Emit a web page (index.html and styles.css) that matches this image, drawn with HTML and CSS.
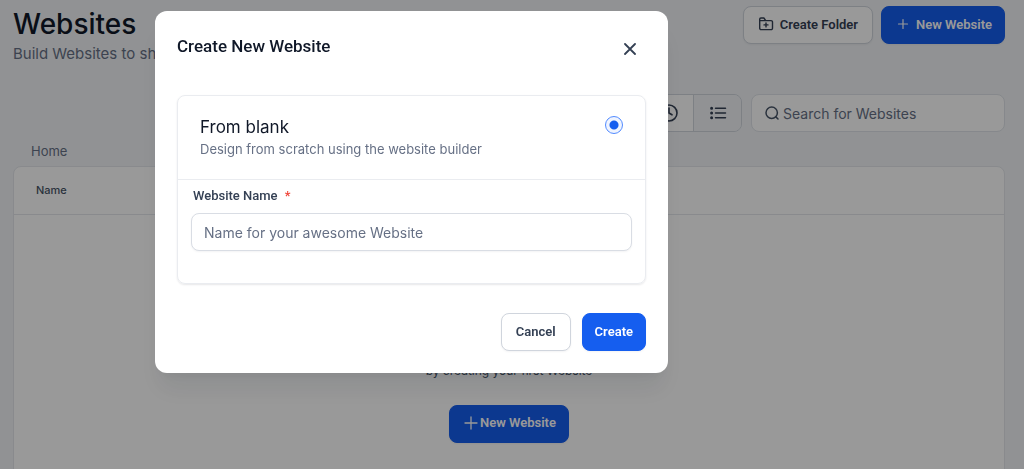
FILE: index.html
```html
<!DOCTYPE html>
<html lang="en">
<head>
    <meta charset="UTF-8">
    <meta name="viewport" content="width=device-width, initial-scale=1.0">
    <title>Websites</title>
    <link rel="stylesheet" href="styles.css">
</head>
<body>
    <main class="page">
        <header class="page-header">
            <div>
                <h1 class="page-title">Websites</h1>
                <p class="page-subtitle">Build Websites to sh</p>
            </div>
            <div class="page-actions">
                <button type="button" class="btn btn-light btn-folder">
                    <svg width="16" height="16" viewBox="0 0 16 16" fill="none" stroke="currentColor" stroke-width="1.4" stroke-linecap="round" stroke-linejoin="round">
                        <path d="M1.7 5V3.2a1.2 1.2 0 0 1 1.2-1.2h3l1.8 2.6h5.4a1.4 1.4 0 0 1 1.4 1.4v6.2a1.4 1.4 0 0 1-1.4 1.4H3.1a1.4 1.4 0 0 1-1.4-1.4V4.6h6M8 6.9v4M6 8.9h4"/>
                    </svg>
                    Create Folder
                </button>
                <button type="button" class="btn btn-primary btn-new">
                    <svg width="12" height="12" viewBox="0 0 12 12" fill="none" stroke="currentColor" stroke-width="1.2" stroke-linecap="round">
                        <path d="M6 1.5v9M1.5 6h9"/>
                    </svg>
                    New Website
                </button>
            </div>
        </header>

        <div class="toolbar">
            <div class="view-switch">
                <button type="button" class="view-btn" aria-label="Recent">
                    <svg width="20" height="20" viewBox="0 0 20 20" fill="none" stroke="currentColor" stroke-width="1.6" stroke-linecap="round" stroke-linejoin="round">
                        <circle cx="10" cy="10" r="8"/>
                        <path d="M10 5v5l3 1.8"/>
                    </svg>
                </button>
                <button type="button" class="view-btn active" aria-label="List">
                    <svg width="18" height="18" viewBox="0 0 18 18" fill="none" stroke="currentColor" stroke-width="1.5" stroke-linecap="round">
                        <path d="M6.5 4.3h10M6.5 9h10M6.5 13.7h10"/>
                        <path stroke-width="3" d="M2.6 4.3h.01M2.6 9h.01M2.6 13.7h.01"/>
                    </svg>
                </button>
            </div>
            <label class="search">
                <svg width="14" height="14" viewBox="0 0 14 14" fill="none" stroke="currentColor" stroke-width="1.5" stroke-linecap="round">
                    <circle cx="6.7" cy="6.7" r="5.7"/>
                    <path d="M10.9 10.9l2.1 2.1"/>
                </svg>
                <input type="search" placeholder="Search for Websites" aria-label="Search for Websites">
            </label>
        </div>

        <nav class="breadcrumb"><a href="#">Home</a></nav>

        <section class="list-card">
            <table class="list-table">
                <thead>
                    <tr><th scope="col">Name</th></tr>
                </thead>
            </table>
            <div class="empty">
                <p class="empty-text">by creating your first Website</p>
                <button type="button" class="btn btn-primary btn-empty">
                    <svg width="14" height="14" viewBox="0 0 14 14" fill="none" stroke="currentColor" stroke-width="1.3" stroke-linecap="round">
                        <path d="M7 1v12M1 7h12"/>
                    </svg>
                    New Website
                </button>
            </div>
        </section>
    </main>

    <div class="overlay">
        <form class="modal" role="dialog" aria-modal="true" aria-labelledby="modal-title">
            <div class="modal-header">
                <h2 class="modal-title" id="modal-title">Create New Website</h2>
                <button type="button" class="modal-close" aria-label="Close">
                    <svg width="12" height="12" viewBox="0 0 12 12" fill="none" stroke="currentColor" stroke-width="1.8" stroke-linecap="round">
                        <path d="M1 1l10 10M11 1L1 11"/>
                    </svg>
                </button>
            </div>

            <div class="option">
                <div class="option-head">
                    <label for="from-blank">
                        <span class="option-title">From blank</span>
                        <span class="option-text">Design from scratch using the website builder</span>
                    </label>
                    <input type="radio" class="radio" id="from-blank" name="source" checked>
                </div>
                <div class="option-body">
                    <label class="field-label" for="website-name">Website Name <span class="required">*</span></label>
                    <input type="text" class="field" id="website-name" placeholder="Name for your awesome Website">
                </div>
            </div>

            <div class="modal-footer">
                <button type="button" class="btn btn-light">Cancel</button>
                <button type="submit" class="btn btn-primary">Create</button>
            </div>
        </form>
    </div>
</body>
</html>
```
FILE: styles.css
```css
* {
    box-sizing: border-box;
}
body {
    margin: 0;
    height: 100vh;
    overflow: hidden;
    background: #f2f4f7;
    color: #101828;
    font-family: Inter, sans-serif;
    font-size: 14px;
}
h1, h2, p {
    margin: 0;
    font-weight: 400;
}
button, input {
    font: inherit;
}
svg {
    flex: none;
}

/* page */
.page {
    padding: 6px 19px 0 13px;
}
.page-header {
    display: flex;
    justify-content: space-between;
    align-items: flex-start;
    height: 88px;
}
.page-title {
    font-size: 28px;
    font-weight: 500;
    line-height: 36px;
}
.page-subtitle {
    font-size: 15px;
    line-height: 24px;
    color: #667085;
}
.page-actions {
    display: flex;
    gap: 8px;
}
.btn {
    display: flex;
    align-items: center;
    justify-content: center;
    height: 38px;
    padding: 0 12px 2px;
    border: 1px solid;
    border-radius: 8px;
    font-family: Roboto, sans-serif;
    font-size: 13px;
    font-weight: 600;
    box-shadow: 0 1px 2px rgba(16, 24, 40, 0.05);
}
.btn-light {
    padding: 0 14px 2px;
    background: #fff;
    border-color: #d0d5dd;
    color: #344054;
}
.btn-primary {
    background: #155eef;
    border-color: #155eef;
    color: #fff;
}
.btn-folder {
    gap: 6px;
}
.btn-new {
    gap: 7px;
    padding-left: 15px;
}

.toolbar {
    display: flex;
    justify-content: flex-end;
    gap: 9px;
}
.view-switch {
    display: flex;
    border: 1px solid #d0d5dd;
    border-radius: 8px;
    overflow: hidden;
}
.view-btn {
    display: flex;
    align-items: center;
    justify-content: center;
    width: 48px;
    height: 36px;
    padding: 0;
    border: 0;
    background: #fff;
    color: #344054;
}
.view-btn.active {
    background: #f2f4f7;
    border-left: 1px solid #d0d5dd;
}
.search {
    display: flex;
    align-items: center;
    gap: 4px;
    width: 254px;
    height: 38px;
    padding: 0 13px;
    background: #fff;
    border: 1px solid #dfe3e9;
    border-radius: 8px;
    color: #475467;
}
.search input {
    flex: 1;
    min-width: 0;
    padding: 0;
    border: 0;
    outline: 0;
    background: none;
}
::placeholder {
    color: #667085;
    opacity: 1;
}

.breadcrumb {
    padding: 9px 18px 5px;
    font-size: 13px;
    line-height: 20px;
}
.breadcrumb a {
    color: #667085;
    text-decoration: none;
}

.list-card {
    background: #fff;
    border: 1px solid #e4e7ec;
    border-radius: 8px;
}
.list-table {
    width: 100%;
    border-collapse: collapse;
}
.list-table th {
    height: 47px;
    padding: 0 22px;
    border-bottom: 1px solid #e4e7ec;
    color: #475467;
    font-size: 11px;
    font-weight: 500;
    text-align: left;
}
.empty {
    display: flex;
    flex-direction: column;
    align-items: center;
    gap: 24px;
    padding: 146px 0 40px;
}
.empty-text {
    font-size: 12px;
    line-height: 20px;
    color: #475467;
}
.btn-empty {
    gap: 2px;
    padding-left: 14px;
}

/* dialog */
.overlay {
    position: fixed;
    inset: 0;
    display: flex;
    justify-content: center;
    align-items: flex-start;
    padding: 11px 201px 0 0;
    background: rgba(0, 0, 0, 0.4);
}
.modal {
    width: 100%;
    max-width: 513px;
    padding: 22px;
    background: #fff;
    border-radius: 12px;
    box-shadow: 0 20px 24px -4px rgba(16, 24, 40, 0.08), 0 8px 8px -4px rgba(16, 24, 40, 0.04);
}
.modal-header {
    display: flex;
    justify-content: space-between;
    align-items: flex-start;
    height: 62px;
}
.modal-title {
    font-family: Roboto, sans-serif;
    font-size: 17px;
    font-weight: 500;
    line-height: 26px;
}
.modal-close {
    display: flex;
    align-items: center;
    justify-content: center;
    width: 32px;
    height: 32px;
    padding: 0;
    border: 0;
    background: none;
    color: #344054;
}
.option {
    border: 1px solid #eaecf0;
    border-radius: 8px;
    box-shadow: 0 1px 2px rgba(16, 24, 40, 0.1);
}
.option-head {
    display: flex;
    justify-content: space-between;
    align-items: flex-start;
    padding: 19px 22px 20px;
    border-bottom: 1px solid #eaecf0;
}
.option-title,
.option-text {
    display: block;
}
.option-title {
    font-size: 17px;
    line-height: 24px;
}
.option-text {
    font-size: 13px;
    line-height: 20px;
    color: #667085;
}
.radio {
    appearance: none;
    width: 18px;
    height: 18px;
    margin: 1px 0 0;
    border: 1px solid #528bff;
    border-radius: 50%;
    background: radial-gradient(circle, #155eef 4px, #eff4ff 5px);
}
.option-body {
    padding: 5px 13px 32px;
}
.field-label {
    display: block;
    padding: 0 2px;
    font-family: Roboto, sans-serif;
    font-size: 13px;
    font-weight: 500;
    line-height: 22px;
    color: #344054;
}
.required {
    margin-left: 4px;
    color: #f04438;
}
.field {
    display: block;
    width: 100%;
    height: 38px;
    margin-top: 6px;
    padding: 0 12px;
    border: 1px solid #d9dde4;
    border-radius: 8px;
    box-shadow: 0 1px 2px rgba(16, 24, 40, 0.05);
}
.modal-footer {
    display: flex;
    justify-content: flex-end;
    gap: 11px;
    padding-top: 29px;
}
```
